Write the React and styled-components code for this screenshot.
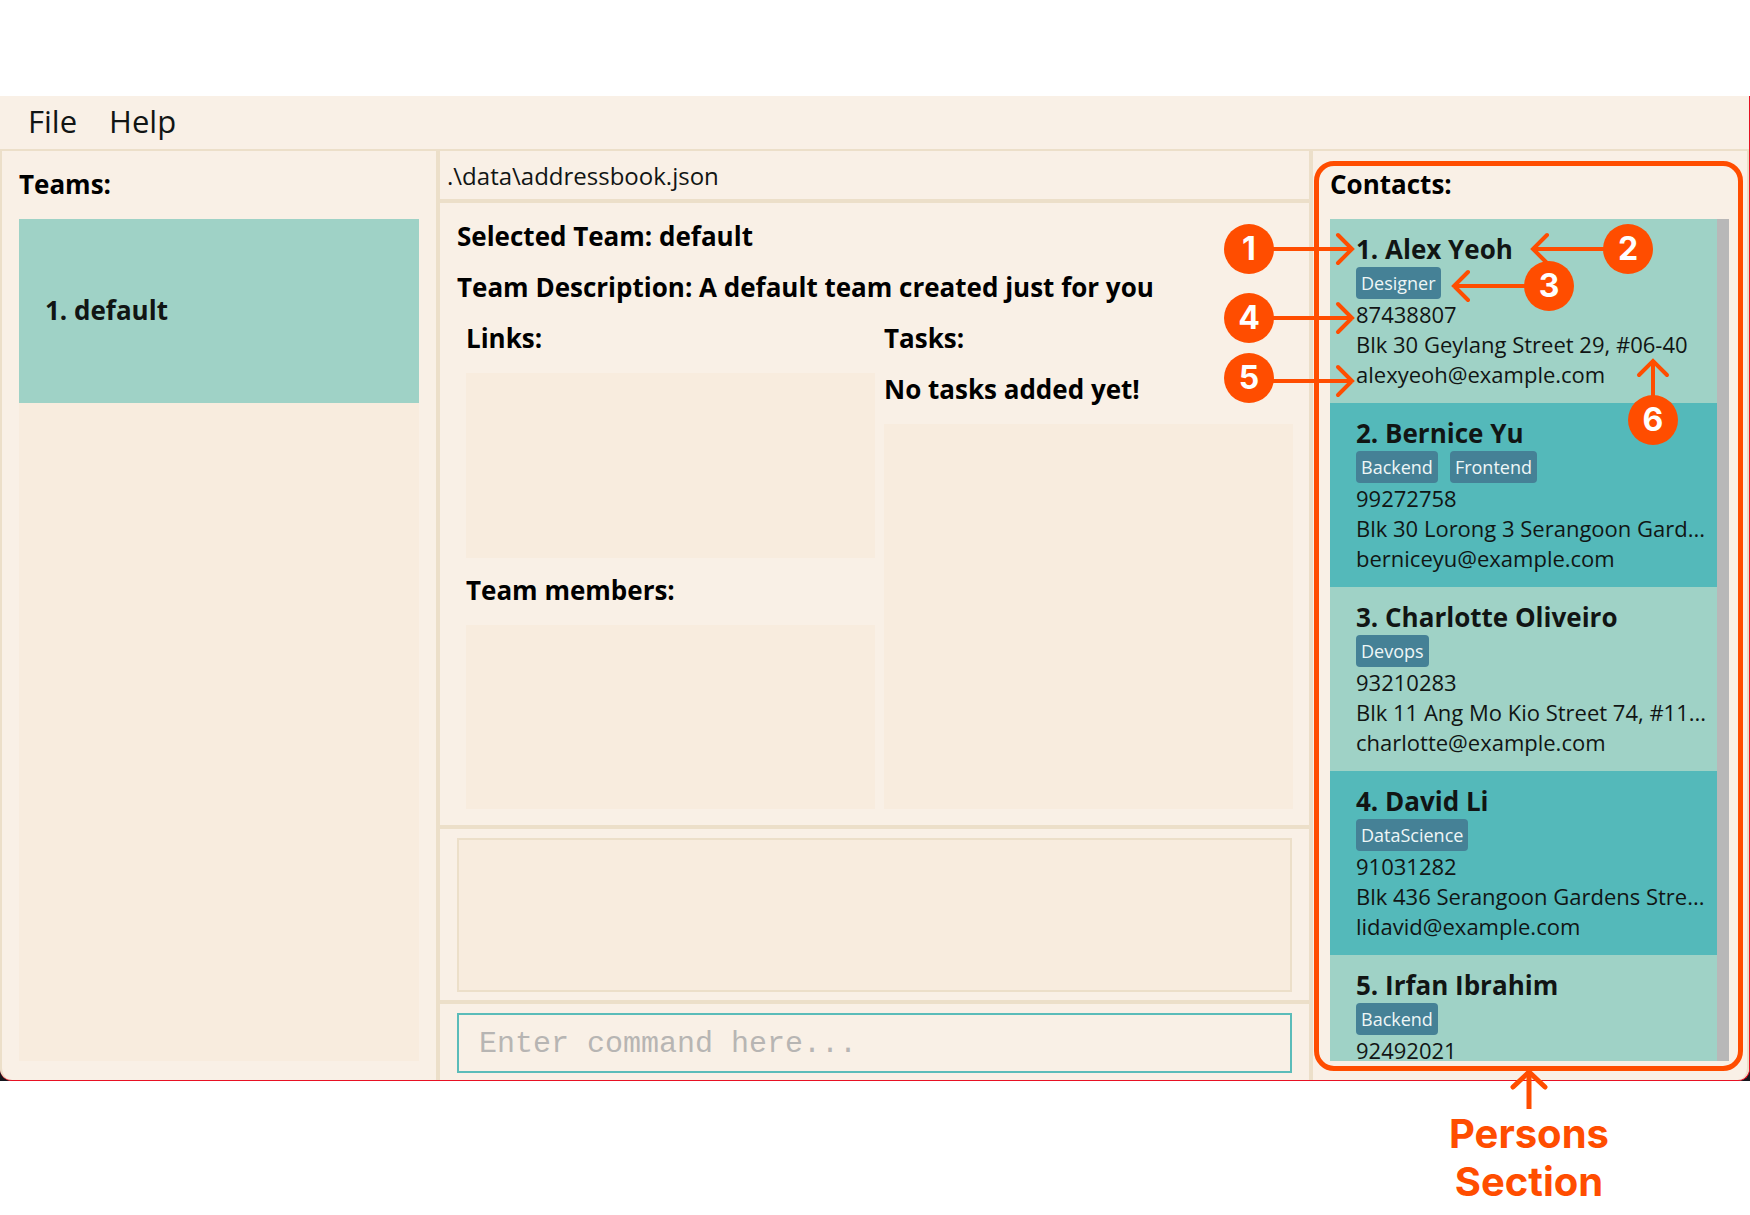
import React from 'react';
import styled, { createGlobalStyle } from 'styled-components';

const color = {
  surface: '#f9f0e6',
  list: '#f8ecde',
  line: '#ecdfc9',
  mint: '#9fd2c6',
  teal: '#54b9ba',
  tag: '#458196',
  ink: '#111514',
  mark: '#ff4d00',
};

const sans = '"Open Sans", "Noto Sans", sans-serif';

const GlobalStyle = createGlobalStyle`
  *, *::before, *::after { box-sizing: border-box; }
  body { margin: 0; background: #fff; }
`;

const Page = styled.div`
  min-height: 100vh;
  padding: 96px 0 134px;
  display: flex;
  flex-direction: column;
  font-family: ${sans};
  color: ${color.ink};
`;

const WindowBack = styled.div`
  flex: 1;
  display: flex;
  background: #15161d;
`;

const Window = styled.main`
  flex: 1;
  min-width: 0;
  display: flex;
  flex-direction: column;
  background: ${color.surface};
  border: solid #e81123;
  border-width: 0 1px 1px 0;
  border-radius: 0 0 12px 12px;
`;

const MenuBar = styled.nav`
  height: 53px;
  padding: 0 12px;
  display: flex;
  align-items: center;
`;

const MenuButton = styled.button`
  padding: 0 16px 4px;
  border: 0;
  background: none;
  color: inherit;
  font: 31px/48px ${sans};
`;

const Panes = styled.div`
  flex: 1;
  min-height: 0;
  display: grid;
  grid-template-columns: 436fr 4px 869fr 4px 436fr;
  border-top: 2px solid ${color.line};
`;

const Divider = styled.div`
  background: ${color.line};
`;

const SidePane = styled.section`
  position: relative;
  min-width: 0;
  padding: 17px 17px 19px;
  display: flex;
  flex-direction: column;
  border: 0 solid ${color.line};
  ${(p) => (p.$edge === 'left'
    ? 'border-left-width: 2px; border-bottom-left-radius: 12px;'
    : 'border-right-width: 2px; border-bottom-right-radius: 12px; padding-right: 18px;')}
`;

const Heading = styled.h2`
  margin: 0;
  padding-bottom: 19px;
  font-size: 26px;
  line-height: 32px;
  font-weight: 700;
  color: #000;
  white-space: nowrap;
`;

const List = styled.ul`
  flex: 1;
  min-height: 0;
  margin: 0;
  padding: 0;
  list-style: none;
  background: ${color.list};
`;

const TeamRow = styled.li`
  height: 184px;
  padding: 0 26px 2px;
  display: flex;
  align-items: center;
  background: ${color.mint};
  font-size: 26px;
  line-height: 36px;
  font-weight: 700;
`;

const Center = styled.div`
  min-width: 0;
  display: flex;
  flex-direction: column;
`;

const PathBar = styled.div`
  height: 48px;
  padding: 0 7px;
  font-size: 24px;
  line-height: 50px;
`;

const Rule = styled.div`
  height: 4px;
  background: ${color.line};
`;

const TeamDetail = styled.section`
  flex: 1;
  padding: 17px 17px 16px;
  display: flex;
  flex-direction: column;
`;

const DetailColumns = styled.div`
  flex: 1;
  margin-left: 9px;
  margin-right: -1px;
  display: grid;
  grid-template-columns: 1fr 1fr;
  gap: 9px;
`;

const DetailColumn = styled.div`
  min-width: 0;
  display: flex;
  flex-direction: column;
  gap: ${(p) => p.$gap || 0}px;
`;

const Group = styled.div`
  flex: 1;
  display: flex;
  flex-direction: column;
`;

const ResultPane = styled.section`
  height: 171px;
  padding: 9px 17px 8px;
`;

const ResultBox = styled.textarea`
  display: block;
  width: 100%;
  height: 100%;
  resize: none;
  border: 2px solid ${color.line};
  outline: 0;
  background: ${color.list};
`;

const CommandPane = styled.form`
  height: 76px;
  padding: 9px 17px 7px;
`;

const CommandInput = styled.input`
  display: block;
  width: 100%;
  height: 60px;
  padding: 2px 20px 0;
  border: 2px solid #5bbcb9;
  outline: 0;
  background: ${color.surface};
  font: 30px/36px "Liberation Mono", monospace;
  color: ${color.ink};
  &::placeholder { color: #b7b5b3; opacity: 1; }
`;

const ContactScroller = styled.div`
  flex: 1 1 0;
  min-height: 0;
  display: grid;
  grid-template-columns: minmax(0, 1fr) 12px;
  overflow: hidden;
`;

const ContactList = styled.ul`
  height: 0;
  min-height: 100%;
  margin: 0;
  padding: 0;
  list-style: none;
  overflow: hidden;
`;

const Track = styled.div`
  background: #b8b8b8;
`;

const ContactRow = styled.li`
  height: 184px;
  padding: 12px 0 0 26px;
  background: ${color.mint};
  white-space: nowrap;
  &:nth-child(even) { background: ${color.teal}; }
`;

const Name = styled.h3`
  margin: 0;
  font-size: 26px;
  line-height: 36px;
  font-weight: 700;
`;

const Tags = styled.div`
  display: flex;
  gap: 12px;
`;

const Tag = styled.span`
  padding: 0 5px;
  border-radius: 4px;
  background: ${color.tag};
  color: #eef6f6;
  font-size: 18px;
  line-height: 32px;
`;

const Line = styled.div`
  font-size: 22px;
  line-height: 30px;
`;

const Overlay = styled.div`
  position: absolute;
  inset: 0;
  pointer-events: none;
  color: ${color.mark};
`;

const Outline = styled.div`
  position: absolute;
  inset: 10px 4px 9px 1px;
  border: 5px solid ${color.mark};
  border-radius: 20px;
`;

const Arrows = styled.svg`
  position: absolute;
  left: 0;
  top: 0;
  width: 100%;
  height: 300px;
  overflow: visible;
  fill: none;
  stroke: ${color.mark};
  stroke-width: 4;
  stroke-linecap: round;
`;

const Badge = styled.span`
  position: absolute;
  left: ${(p) => p.$x}px;
  top: ${(p) => p.$y}px;
  width: 50px;
  height: 50px;
  border-radius: 50%;
  background: ${color.mark};
  color: #fff;
  text-align: center;
  font: 700 32px/50px Inter, sans-serif;
`;

const Caption = styled.div`
  position: absolute;
  left: 0;
  right: 2px;
  top: calc(100% - 12px);
  display: flex;
  flex-direction: column;
  align-items: center;
  text-align: center;
  font: 700 40px/48px Inter, sans-serif;
`;

const CaptionArrow = styled.svg`
  display: block;
  margin-bottom: 1px;
  fill: none;
  stroke: ${color.mark};
  stroke-width: 5;
  stroke-linecap: round;
`;

const contacts = [
  { name: 'Alex Yeoh', tags: ['Designer'], phone: '87438807', address: 'Blk 30 Geylang Street 29, #06-40', email: 'alexyeoh@example.com' },
  { name: 'Bernice Yu', tags: ['Backend', 'Frontend'], phone: '99272758', address: 'Blk 30 Lorong 3 Serangoon Gard...', email: 'berniceyu@example.com' },
  { name: 'Charlotte Oliveiro', tags: ['Devops'], phone: '93210283', address: 'Blk 11 Ang Mo Kio Street 74, #11...', email: 'charlotte@example.com' },
  { name: 'David Li', tags: ['DataScience'], phone: '91031282', address: 'Blk 436 Serangoon Gardens Stre...', email: 'lidavid@example.com' },
  { name: 'Irfan Ibrahim', tags: ['Backend'], phone: '92492021' },
];

const badges = [
  { n: 1, x: -89, y: 73 },
  { n: 2, x: 290, y: 73 },
  { n: 3, x: 211, y: 110 },
  { n: 4, x: -89, y: 142 },
  { n: 5, x: -89, y: 202 },
  { n: 6, x: 315, y: 244 },
];

function Contact({ index, contact }) {
  return (
    <ContactRow>
      <Name>{`${index}. ${contact.name}`}</Name>
      <Tags>
        {contact.tags.map((t) => <Tag key={t}>{t}</Tag>)}
      </Tags>
      <Line>{contact.phone}</Line>
      {contact.address && <Line>{contact.address}</Line>}
      {contact.email && <Line>{contact.email}</Line>}
    </ContactRow>
  );
}

function Annotations() {
  return (
    <Overlay>
      <Outline />
      <Arrows aria-hidden="true">
        <path d="M-40 98H39M25 84L39 98L25 112" />
        <path d="M-40 167H39M25 153L39 167L25 181" />
        <path d="M-40 230H39M25 216L39 230L25 244" />
        <path d="M292 98H220M234 84L220 98L234 112" />
        <path d="M213 135H141M155 121L141 135L155 149" />
        <path d="M340 246V211M326 224L340 210L354 224" />
      </Arrows>
      {badges.map((b) => <Badge key={b.n} $x={b.x} $y={b.y}>{b.n}</Badge>)}
      <Caption>
        <CaptionArrow width="40" height="41" viewBox="0 0 40 41" aria-hidden="true">
          <path d="M20 5V41" strokeLinecap="butt" />
          <path d="M4 19L20 4L36 19" />
        </CaptionArrow>
        <span>Persons</span>
        <span>Section</span>
      </Caption>
    </Overlay>
  );
}

export default function App() {
  return (
    <>
      <GlobalStyle />
      <Page>
        <WindowBack>
          <Window>
            <MenuBar>
              <MenuButton type="button">File</MenuButton>
              <MenuButton type="button">Help</MenuButton>
            </MenuBar>
            <Panes>
              <SidePane $edge="left">
                <Heading>Teams:</Heading>
                <List>
                  <TeamRow>1. default</TeamRow>
                </List>
              </SidePane>
              <Divider />
              <Center>
                <PathBar>.\data\addressbook.json</PathBar>
                <Rule />
                <TeamDetail>
                  <Heading>Selected Team: default</Heading>
                  <Heading>Team Description: A default team created just for you</Heading>
                  <DetailColumns>
                    <DetailColumn $gap={16}>
                      <Group>
                        <Heading>Links:</Heading>
                        <List />
                      </Group>
                      <Group>
                        <Heading>Team members:</Heading>
                        <List />
                      </Group>
                    </DetailColumn>
                    <DetailColumn>
                      <Heading>Tasks:</Heading>
                      <Heading>No tasks added yet!</Heading>
                      <List />
                    </DetailColumn>
                  </DetailColumns>
                </TeamDetail>
                <Rule />
                <ResultPane>
                  <ResultBox readOnly aria-label="Command result" />
                </ResultPane>
                <Rule />
                <CommandPane>
                  <CommandInput aria-label="Command" placeholder="Enter command here..." />
                </CommandPane>
              </Center>
              <Divider />
              <SidePane $edge="right">
                <Heading>Contacts:</Heading>
                <ContactScroller>
                  <ContactList>
                    {contacts.map((c, i) => <Contact key={c.name} index={i + 1} contact={c} />)}
                  </ContactList>
                  <Track />
                </ContactScroller>
                <Annotations />
              </SidePane>
            </Panes>
          </Window>
        </WindowBack>
      </Page>
    </>
  );
}
